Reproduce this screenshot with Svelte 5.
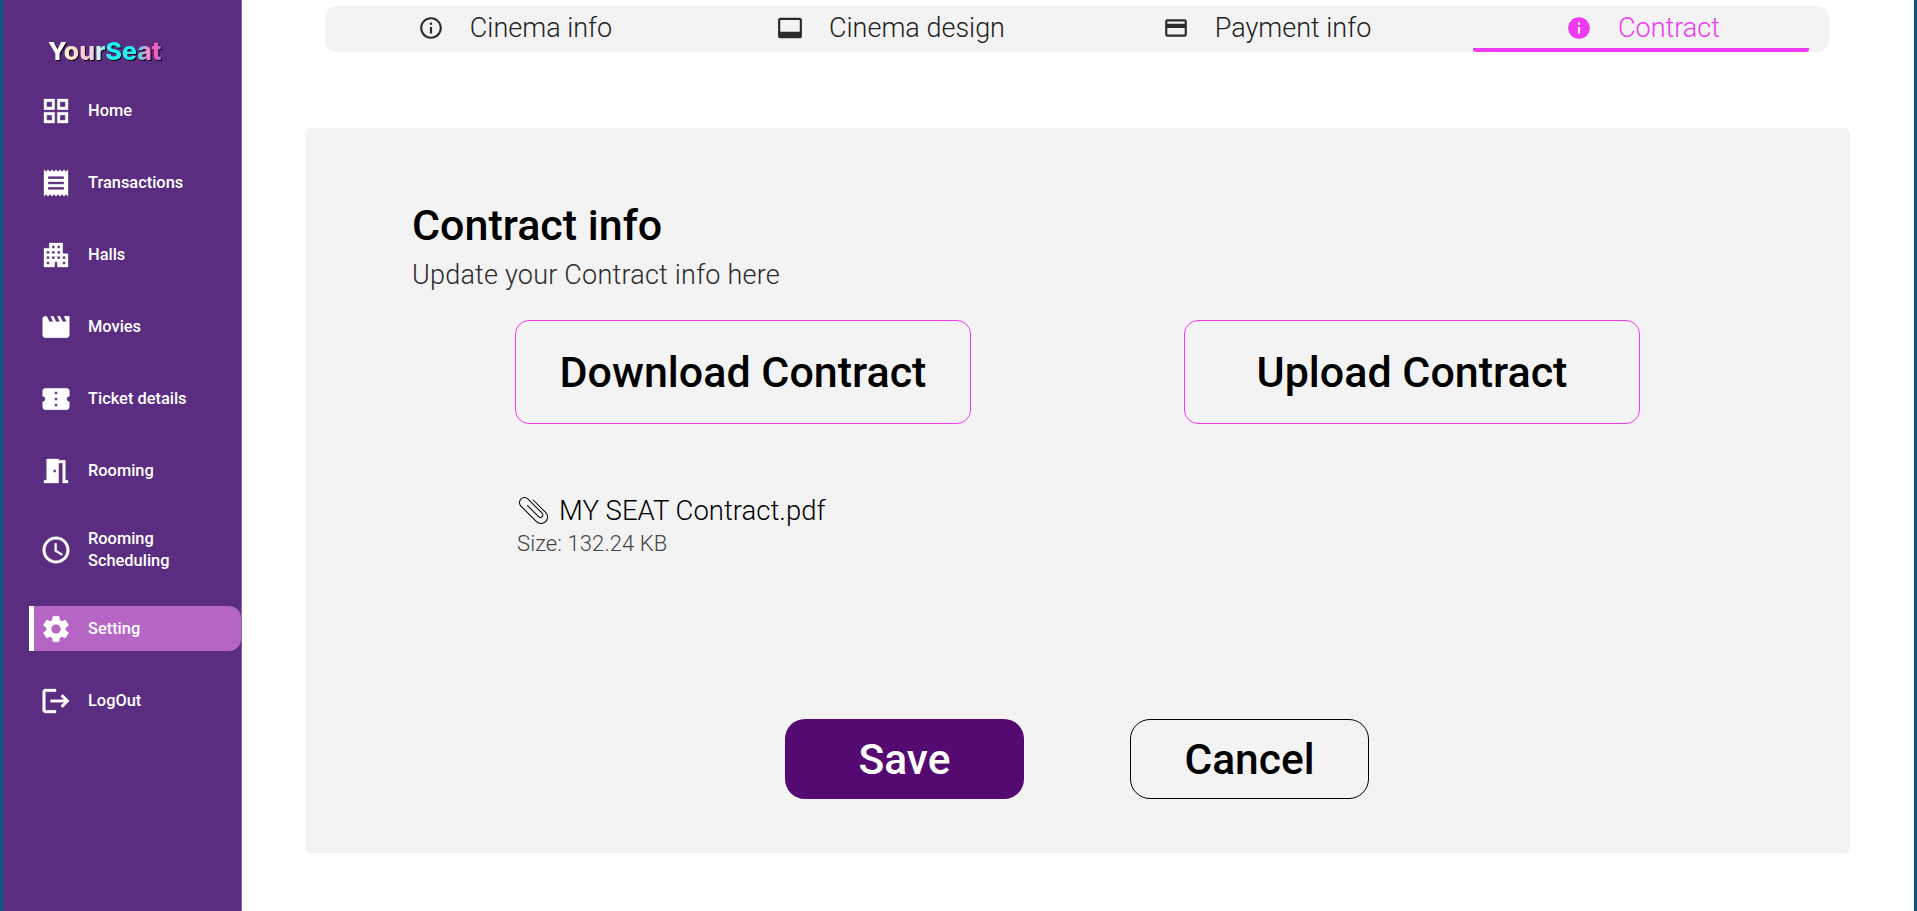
<script>
  // sidebar entries, icon paths are Material 24px glyphs
  const nav = [
    { label: 'Home', d: 'M3 3v8h8V3H3zm6 6H5V5h4v4zm-6 4v8h8v-8H3zm6 6H5v-4h4v4zm4-16v8h8V3h-8zm6 6h-4V5h4v4zm-6 4v8h8v-8h-8zm6 6h-4v-4h4v4z' },
    { label: 'Transactions', d: 'M18 17H6v-2h12v2zm0-4H6v-2h12v2zm0-4H6V7h12v2zM3 22l1.5-1.5L6 22l1.5-1.5L9 22l1.5-1.5L12 22l1.5-1.5L15 22l1.5-1.5L18 22l1.5-1.5L21 22V2l-1.5 1.5L18 2l-1.5 1.5L15 2l-1.5 1.5L12 2l-1.5 1.5L9 2 7.5 3.5 6 2 4.5 3.5 3 2v20z' },
    { label: 'Halls', d: 'M17 11V3H7v4H3v14h8v-4h2v4h8V11h-4zM7 19H5v-2h2v2zm0-4H5v-2h2v2zm0-4H5V9h2v2zm4 4H9v-2h2v2zm0-4H9V9h2v2zm0-4H9V5h2v2zm4 8h-2v-2h2v2zm0-4h-2V9h2v2zm0-4h-2V5h2v2zm4 12h-2v-2h2v2zm0-4h-2v-2h2v2z' },
    { label: 'Movies', d: 'm18 4 2 4h-3l-2-4h-2l2 4h-3l-2-4H8l2 4H7L5 4H4c-1.1 0-1.99.9-1.99 2L2 18c0 1.1.9 2 2 2h16c1.1 0 2-.9 2-2V4h-4z' },
    { label: 'Ticket details', d: 'M22 10V6c0-1.11-.9-2-2-2H4c-1.1 0-1.99.89-1.99 2v4c1.1 0 1.99.9 1.99 2s-.89 2-2 2v4c0 1.1.9 2 2 2h16c1.1 0 2-.9 2-2v-4c-1.1 0-2-.9-2-2s.9-2 2-2zm-9 7.5h-2v-2h2v2zm0-4.5h-2v-2h2v2zm0-4.5h-2v-2h2v2z' },
    { label: 'Rooming', d: 'M14 6v15H3v-2h2V3h9v1h5v15h2v2h-4V6h-3zm-4 5v2h2v-2h-2z' },
    { label: 'Rooming Scheduling', tall: true, d: 'M11.99 2C6.47 2 2 6.48 2 12s4.47 10 9.99 10C17.52 22 22 17.52 22 12S17.52 2 11.99 2zM12 20c-4.42 0-8-3.58-8-8s3.58-8 8-8 8 3.58 8 8-3.58 8-8 8zm.5-13H11v6l5.25 3.15.75-1.23-4.5-2.67z' },
    { label: 'Setting', active: true, d: 'M19.14 12.94c.04-.3.06-.61.06-.94 0-.32-.02-.64-.07-.94l2.03-1.58c.18-.14.23-.41.12-.61l-1.92-3.32c-.12-.22-.37-.29-.59-.22l-2.39.96c-.5-.38-1.03-.7-1.62-.94l-.36-2.54c-.04-.24-.24-.41-.48-.41h-3.84c-.24 0-.43.17-.47.41l-.36 2.54c-.59.24-1.13.57-1.62.94l-2.39-.96c-.22-.08-.47 0-.59.22L2.74 8.87c-.12.21-.08.47.12.61l2.03 1.58c-.05.3-.09.63-.09.94s.02.64.07.94l-2.03 1.58c-.18.14-.23.41-.12.61l1.92 3.32c.12.22.37.29.59.22l2.39-.96c.5.38 1.03.7 1.62.94l.36 2.54c.05.24.24.41.48.41h3.84c.24 0 .44-.17.47-.41l.36-2.54c.59-.24 1.13-.56 1.62-.94l2.39.96c.22.08.47 0 .59-.22l1.92-3.32c.12-.22.07-.47-.12-.61l-2.01-1.58zM12 15.6c-1.98 0-3.6-1.62-3.6-3.6s1.62-3.6 3.6-3.6 3.6 1.62 3.6 3.6-1.62 3.6-3.6 3.6z' },
    { label: 'LogOut', d: 'M17 7l-1.41 1.41L18.17 11H8v2h10.17l-2.58 2.58L17 17l5-5zM4 5h8V3H4c-1.1 0-2 .9-2 2v14c0 1.1.9 2 2 2h8v-2H4V5z' }
  ]

  const tabs = [
    { label: 'Cinema info', d: 'M11 7h2v2h-2zm0 4h2v6h-2zm1-9C6.48 2 2 6.48 2 12s4.48 10 10 10 10-4.48 10-10S17.52 2 12 2zm0 18c-4.41 0-8-3.59-8-8s3.59-8 8-8 8 3.59 8 8-3.59 8-8 8z' },
    { label: 'Cinema design', d: 'M21 2.5H3c-1.1 0-2 .9-2 2v15c0 1.1.9 2 2 2h18c1.1 0 2-.9 2-2v-15c0-1.1-.9-2-2-2zm0 13H3v-11h18v11z' },
    { label: 'Payment info', d: 'M20 4H4c-1.11 0-1.99.89-1.99 2L2 18c0 1.11.89 2 2 2h16c1.11 0 2-.89 2-2V6c0-1.11-.89-2-2-2zm0 14H4v-6h16v6zm0-10H4V6h16v2z' },
    { label: 'Contract', active: true, d: 'M12 2C6.48 2 2 6.48 2 12s4.48 10 10 10 10-4.48 10-10S17.52 2 12 2zm1 15h-2v-6h2v6zm0-8h-2V7h2v2z' }
  ]
</script>

<div class="page">
  <aside class="sidebar">
    <div class="logo">YourSeat</div>
    <nav>
      {#each nav as item}
        <div class="nav-item" class:active={item.active} class:tall={item.tall}>
          <svg viewBox="0 0 24 24"><path d={item.d} /></svg>
          <span>{item.label}</span>
        </div>
      {/each}
    </nav>
  </aside>

  <main>
    <div class="tabs">
      {#each tabs as tab}
        <div class="tab" class:active={tab.active}>
          <svg viewBox="0 0 24 24"><path d={tab.d} /></svg>
          <span>{tab.label}</span>
        </div>
      {/each}
    </div>

    <section class="card">
      <h1>Contract info</h1>
      <p class="sub">Update your Contract info here</p>

      <div class="contract-btns">
        <button>Download Contract</button>
        <button>Upload Contract</button>
      </div>

      <div class="file">
        <div class="file-name">
          <svg viewBox="-7.5 1 34 34"><path transform="rotate(-45 9.5 18)" d="M8 10V26A2.5 2.5 0 0 0 13 26V6A5 5 0 0 0 3 6V28A6.5 6.5 0 0 0 16 28V10" /></svg>
          <span>MY SEAT Contract.pdf</span>
        </div>
        <div class="file-size">Size: 132.24 KB</div>
      </div>

      <div class="actions">
        <button class="save">Save</button>
        <button class="cancel">Cancel</button>
      </div>
    </section>
  </main>
</div>

<style>
  :global(body) {
    margin: 0;
    font-family: Roboto, "Liberation Sans", sans-serif;
    background: #fff;
  }

  .page {
    display: flex;
    height: 911px;
    overflow: hidden;
    border-left: 3px solid #0b5480;
    border-right: 3px solid #0b5480;
    box-sizing: border-box;
  }

  .sidebar {
    flex: 0 0 239px;
    background: #5a2d81;
    border-right: 1px solid #8a6aa6;
    box-sizing: border-box;
  }

  .logo {
    margin: 36px 0 0 45px;
    width: max-content;
    font-family: Inter, sans-serif;
    font-size: 25px;
    line-height: 30px;
    font-weight: 800;
    color: transparent;
    background: linear-gradient(90deg, #fff 0%, #fff 10%, #ffe6c8 20%, #ffc4dc 34%, #c8f6f8 46%, #1ff0f0 54%, #1ff0f2 76%, #ff8ad0 88%, #ff5cb0 94%, #8a7cff 100%);
    -webkit-background-clip: text;
    background-clip: text;
    filter: drop-shadow(1.5px 1.5px 0.4px #000);
  }

  nav {
    margin-top: 22px;
    display: flex;
    flex-direction: column;
    gap: 27px;
  }

  .nav-item {
    display: flex;
    align-items: center;
    height: 45px;
    margin-left: 26px;
    padding-left: 11px;
    gap: 16px;
    color: #fff;
    font-size: 16.4px;
    font-weight: 500;
    line-height: 22px;
  }

  .nav-item.tall {
    height: 59px;
  }

  .nav-item svg {
    flex: 0 0 32px;
    width: 32px;
    height: 32px;
    fill: #fff;
    stroke: #fff;
    stroke-width: 0.25;
  }

  .nav-item span {
    width: 110px;
  }

  .nav-item.active {
    background: #b565c4;
    border-left: 5px solid #fff;
    padding-left: 6px;
    border-radius: 0 12px 12px 0;
  }

  main {
    flex: 1;
    min-width: 0;
    padding: 6px 64px 0 63px;
  }

  .tabs {
    display: grid;
    grid-template-columns: repeat(4, 1fr);
    height: 46px;
    width: 1504px;
    margin-left: 20px;
    background: #f3f3f3;
    border-radius: 12px;
  }

  .tab {
    display: flex;
    align-items: center;
    justify-content: center;
    gap: 26px;
    height: 44px;
    margin: 0 20px;
    padding-left: 4px;
    color: #222;
    font-size: 27px;
    font-weight: 300;
  }

  .tab svg {
    width: 26px;
    height: 26px;
    fill: #2b2b2b;
  }

  .tab.active {
    height: 46px;
    box-sizing: border-box;
    padding-top: 2px;
    border-bottom: 4px solid #ee3af0;
    border-radius: 0 0 3px 3px;
    color: #ee3af0;
  }

  .tab.active svg {
    fill: #ee3af0;
  }

  .card {
    margin-top: 76px;
    height: 725px;
    box-sizing: border-box;
    background: #f3f3f3;
    border-radius: 6px;
    padding: 72px 106px 0 107px;
  }

  h1 {
    margin: 0;
    font-size: 43px;
    line-height: 50px;
    font-weight: 500;
    color: #000;
  }

  .sub {
    margin: 9px 0 0;
    font-size: 27px;
    line-height: 32px;
    font-weight: 300;
    letter-spacing: 0.22px;
    color: #2e2a2c;
  }

  .contract-btns {
    display: flex;
    justify-content: space-between;
    margin: 29px 104px 0 103px;
  }

  .contract-btns button {
    width: 456px;
    height: 104px;
    border: 1px solid #ee3af0;
    border-radius: 14px;
    background: transparent;
    font-family: inherit;
    font-size: 43px;
    font-weight: 500;
    color: #000;
  }

  .file {
    margin: 69px 0 0 105px;
  }

  .file-name {
    display: flex;
    align-items: center;
    gap: 8px;
    font-size: 27.5px;
    font-weight: 300;
    color: #000;
  }

  .file-name svg {
    width: 34px;
    height: 34px;
    fill: none;
    stroke: #000;
    stroke-width: 1;
  }

  .file-size {
    margin-top: 4px;
    font-size: 22px;
    font-weight: 300;
    letter-spacing: 0.1px;
    color: #444;
  }

  .actions {
    display: flex;
    justify-content: center;
    gap: 106px;
    margin-top: 163px;
    padding-right: 2px;
  }

  .actions button {
    width: 239px;
    height: 80px;
    border-radius: 20px;
    font-family: inherit;
    font-size: 42.5px;
    font-weight: 500;
  }

  .save {
    background: #550a72;
    border: none;
    color: #fff;
  }

  .cancel {
    background: transparent;
    border: 1px solid #000;
    color: #000;
  }
</style>
